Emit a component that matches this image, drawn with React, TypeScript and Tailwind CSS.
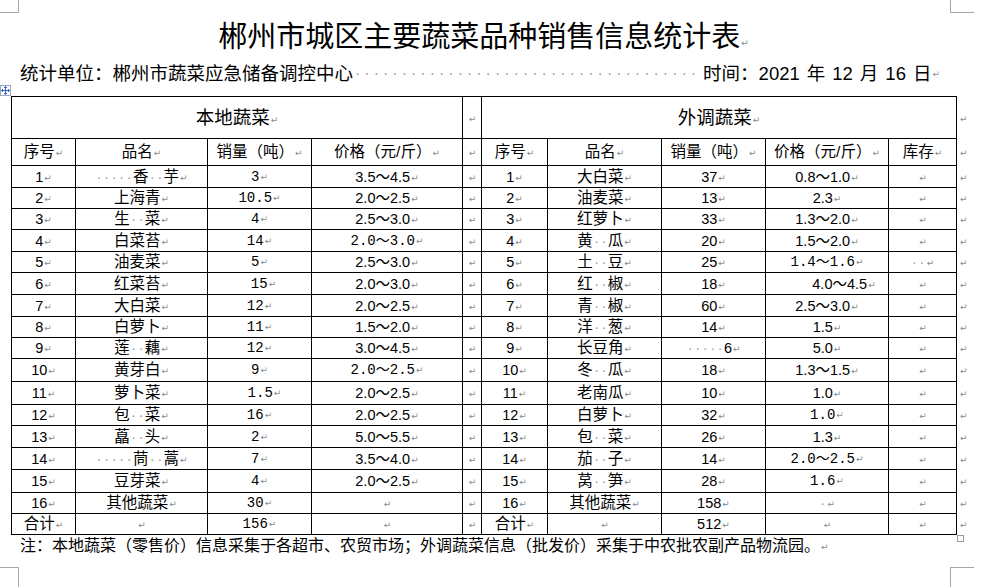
import React from 'react';

type Cell = { t: string; f?: 'sans' | 'mono'; pl?: number };

const cjk = "font-['Liberation_Sans','Noto_Sans_CJK_SC',sans-serif]";
const mono = "font-['Liberation_Mono','Noto_Sans_CJK_SC',monospace]";

// Word paragraph mark
const Mark: React.FC = () => (
  <span className="font-['DejaVu_Sans'] text-[9px] leading-none text-[#8a8a8a] ml-[1px] align-[1px]">↵</span>
);

// spaces shown as grey middle dots
const Txt: React.FC<{ s: string }> = ({ s }) => (
  <>
    {s.split('').map((c, i) =>
      c === '·' ? (
        <span key={i} className="inline-block w-[7.5px] text-center text-[#a0a0a0]">·</span>
      ) : (
        <span key={i}>{c}</span>
      )
    )}
  </>
);

const Sp: React.FC = () => <span className="inline-block w-[7px]" />;

const local: Cell[][] = [
  [{ t: '1' }, { t: '·····香··芋' }, { t: '3', f: 'mono' }, { t: '3.5～4.5' }],
  [{ t: '2' }, { t: '上海青' }, { t: '10.5', f: 'mono' }, { t: '2.0～2.5' }],
  [{ t: '3' }, { t: '生··菜' }, { t: '4', f: 'mono' }, { t: '2.5～3.0' }],
  [{ t: '4' }, { t: '白菜苔' }, { t: '14', f: 'mono' }, { t: '2.0～3.0', f: 'mono' }],
  [{ t: '5' }, { t: '油麦菜' }, { t: '5', f: 'mono' }, { t: '2.5～3.0' }],
  [{ t: '6' }, { t: '红菜苔' }, { t: '15', f: 'mono', pl: 8 }, { t: '2.0～3.0' }],
  [{ t: '7' }, { t: '大白菜' }, { t: '12', f: 'mono' }, { t: '2.0～2.5' }],
  [{ t: '8' }, { t: '白萝卜' }, { t: '11', f: 'mono' }, { t: '1.5～2.0' }],
  [{ t: '9' }, { t: '莲··藕' }, { t: '12', f: 'mono' }, { t: '3.0～4.5' }],
  [{ t: '10' }, { t: '黄芽白' }, { t: '9', f: 'mono' }, { t: '2.0～2.5', f: 'mono' }],
  [{ t: '11' }, { t: '萝卜菜' }, { t: '1.5', f: 'mono', pl: 10 }, { t: '2.0～2.5' }],
  [{ t: '12' }, { t: '包··菜' }, { t: '16', f: 'mono' }, { t: '2.0～2.5' }],
  [{ t: '13' }, { t: '藠··头' }, { t: '2', f: 'mono' }, { t: '5.0～5.5' }],
  [{ t: '14' }, { t: '·····茼··蒿' }, { t: '7', f: 'mono' }, { t: '3.5～4.0' }],
  [{ t: '15' }, { t: '豆芽菜' }, { t: '4', f: 'mono' }, { t: '2.0～2.5' }],
  [{ t: '16' }, { t: '其他蔬菜' }, { t: '30', f: 'mono' }, { t: '' }],
  [{ t: '合计' }, { t: '' }, { t: '156', f: 'mono' }, { t: '' }],
];

const outside: Cell[][] = [
  [{ t: '1' }, { t: '大白菜' }, { t: '37' }, { t: '0.8～1.0' }, { t: '' }],
  [{ t: '2' }, { t: '油麦菜' }, { t: '13' }, { t: '2.3' }, { t: '' }],
  [{ t: '3' }, { t: '红萝卜' }, { t: '33' }, { t: '1.3～2.0' }, { t: '' }],
  [{ t: '4' }, { t: '黄··瓜' }, { t: '20' }, { t: '1.5～2.0' }, { t: '' }],
  [{ t: '5' }, { t: '土··豆' }, { t: '25' }, { t: '1.4～1.6', f: 'mono' }, { t: '··' }],
  [{ t: '6' }, { t: '红··椒' }, { t: '18' }, { t: '4.0～4.5', pl: 34 }, { t: '' }],
  [{ t: '7' }, { t: '青··椒' }, { t: '60' }, { t: '2.5～3.0' }, { t: '' }],
  [{ t: '8' }, { t: '洋··葱' }, { t: '14' }, { t: '1.5' }, { t: '' }],
  [{ t: '9' }, { t: '长豆角' }, { t: '·····6' }, { t: '5.0' }, { t: '' }],
  [{ t: '10' }, { t: '冬··瓜' }, { t: '18' }, { t: '1.3～1.5' }, { t: '' }],
  [{ t: '11' }, { t: '老南瓜' }, { t: '10' }, { t: '1.0' }, { t: '' }],
  [{ t: '12' }, { t: '白萝卜' }, { t: '32' }, { t: '1.0', f: 'mono' }, { t: '' }],
  [{ t: '13' }, { t: '包··菜' }, { t: '26' }, { t: '1.3' }, { t: '' }],
  [{ t: '14' }, { t: '茄··子' }, { t: '14' }, { t: '2.0～2.5', f: 'mono' }, { t: '' }],
  [{ t: '15' }, { t: '莴··笋' }, { t: '28' }, { t: '1.6', f: 'mono' }, { t: '' }],
  [{ t: '16' }, { t: '其他蔬菜' }, { t: '158' }, { t: '·' }, { t: '' }],
  [{ t: '合计' }, { t: '' }, { t: '512' }, { t: '' }, { t: '' }],
];

const rowH = [22, 21, 21, 22, 21, 22, 22, 21, 21, 23, 23, 21, 22, 22, 23, 21, 21];

const isCjk = (s: string) => /[\u4e00-\u9fff]/.test(s);

const Td: React.FC<{ c: Cell }> = ({ c }) => {
  const font = c.f === 'mono' ? `${mono} text-[14px]` : isCjk(c.t) ? 'text-[15.5px]' : 'text-[14.5px]';
  return (
    <td className={`border border-black text-center align-middle p-0 leading-[16px] whitespace-nowrap ${font}`}>
      <span style={c.pl ? { paddingLeft: c.pl } : undefined}>
        <Txt s={c.t} />
        <Mark />
      </span>
    </td>
  );
};

const widths = [64, 132, 104, 151, 19, 66, 114, 104, 123, 68, 14];

const App: React.FC = () => {
  return (
    <div className={`relative w-[985px] h-[587px] bg-white overflow-hidden text-black ${cjk}`}>
      {/* page corner marks */}
      <div className="absolute left-0 top-0 w-[19px] h-[13px] border-r border-b border-[#a6a6a6]" />
      <div className="absolute left-[950px] top-0 w-[24px] h-[13px] border-l border-b border-[#a6a6a6]" />
      <div className="absolute left-0 top-[567px] w-[19px] h-[20px] border-r border-t border-[#a6a6a6]" />
      <div className="absolute left-[950px] top-[567px] w-[24px] h-[20px] border-l border-t border-[#a6a6a6]" />

      <div className="pt-[16px]">
        {/* Title */}
        <div className="w-[967px] text-center text-[29px] leading-[36px] font-['Noto_Sans_CJK_SC',sans-serif]">
          郴州市城区主要蔬菜品种销售信息统计表
          <Mark />
        </div>

        {/* Unit / date line */}
        <div className="mt-[10px] ml-[20px] w-[920px] flex items-center text-[18.5px] leading-[24px] whitespace-nowrap">
          <span className="shrink-0">统计单位：郴州市蔬菜应急储备调控中心</span>
          <span className="flex-1 min-w-0 text-[#a0a0a0] text-[16px]">
            {Array.from({ length: 37 }).map((_, i) => (
              <span key={i} className="inline-block w-[9.33px] text-center">·</span>
            ))}
          </span>
          <span className="shrink-0">
            时间：2021<Sp />年<Sp />12<Sp />月<Sp />16<Sp />日
          </span>
          <Mark />
        </div>

        {/* Table */}
        <div className="relative mt-[10px] ml-[11px]">
          <div className="absolute -left-[11px] -top-[11px] w-[11px] h-[11px] border border-[#9aa6b8] bg-white flex items-center justify-center">
            <svg width="9" height="9" viewBox="0 0 9 9" fill="none" stroke="#2f63c4" strokeWidth="1">
              <path d="M4.5 0.5v8M0.5 4.5h8" />
              <path d="M3 2l1.5-1.5L6 2M3 7l1.5 1.5L6 7M2 3L0.5 4.5 2 6M7 3l1.5 1.5L7 6" />
            </svg>
          </div>
          <table className="border-collapse table-fixed w-[959px]">
            <colgroup>
              {widths.map((w, i) => (
                <col key={i} style={{ width: w }} />
              ))}
            </colgroup>
            <tbody>
              <tr className="h-[42px]">
                <td colSpan={4} className="border border-black text-center align-middle text-[18.5px] leading-[20px] p-0">
                  本地蔬菜
                  <Mark />
                </td>
                <td className="border border-black text-center align-middle p-0 leading-[16px]">
                  <Mark />
                </td>
                <td colSpan={5} className="border border-black text-center align-middle text-[18.5px] leading-[20px] p-0">
                  外调蔬菜
                  <Mark />
                </td>
                <td className="p-0 pl-[2px] align-middle leading-[16px]">
                  <Mark />
                </td>
              </tr>
              <tr className="h-[27px]">
                {['序号', '品名', '销量（吨）', '价格（元/斤）'].map((h) => (
                  <Td key={'l' + h} c={{ t: h }} />
                ))}
                <Td c={{ t: '' }} />
                {['序号', '品名', '销量（吨）', '价格（元/斤）', '库存'].map((h) => (
                  <Td key={'r' + h} c={{ t: h }} />
                ))}
                <td className="p-0 pl-[2px] align-middle leading-[16px]">
                  <Mark />
                </td>
              </tr>
              {local.map((row, i) => (
                <tr key={i} style={{ height: rowH[i] }}>
                  {row.map((c, j) => (
                    <Td key={'a' + j} c={c} />
                  ))}
                  <Td c={{ t: '' }} />
                  {outside[i].map((c, j) => (
                    <Td key={'b' + j} c={c} />
                  ))}
                  <td className="p-0 pl-[2px] align-middle leading-[16px]">
                    <Mark />
                  </td>
                </tr>
              ))}
            </tbody>
          </table>
          <div className="absolute left-[946px] top-full w-[7px] h-[7px] border border-[#9a9a9a] bg-white" />
        </div>

        {/* Note */}
        <div className="ml-[20px] text-[16px] leading-[21px] whitespace-nowrap">
          注：本地蔬菜（零售价）信息采集于各超市、农贸市场；外调蔬菜信息（批发价）采集于中农批农副产品物流园。
          <Mark />
        </div>
      </div>
    </div>
  );
};

export default App;
